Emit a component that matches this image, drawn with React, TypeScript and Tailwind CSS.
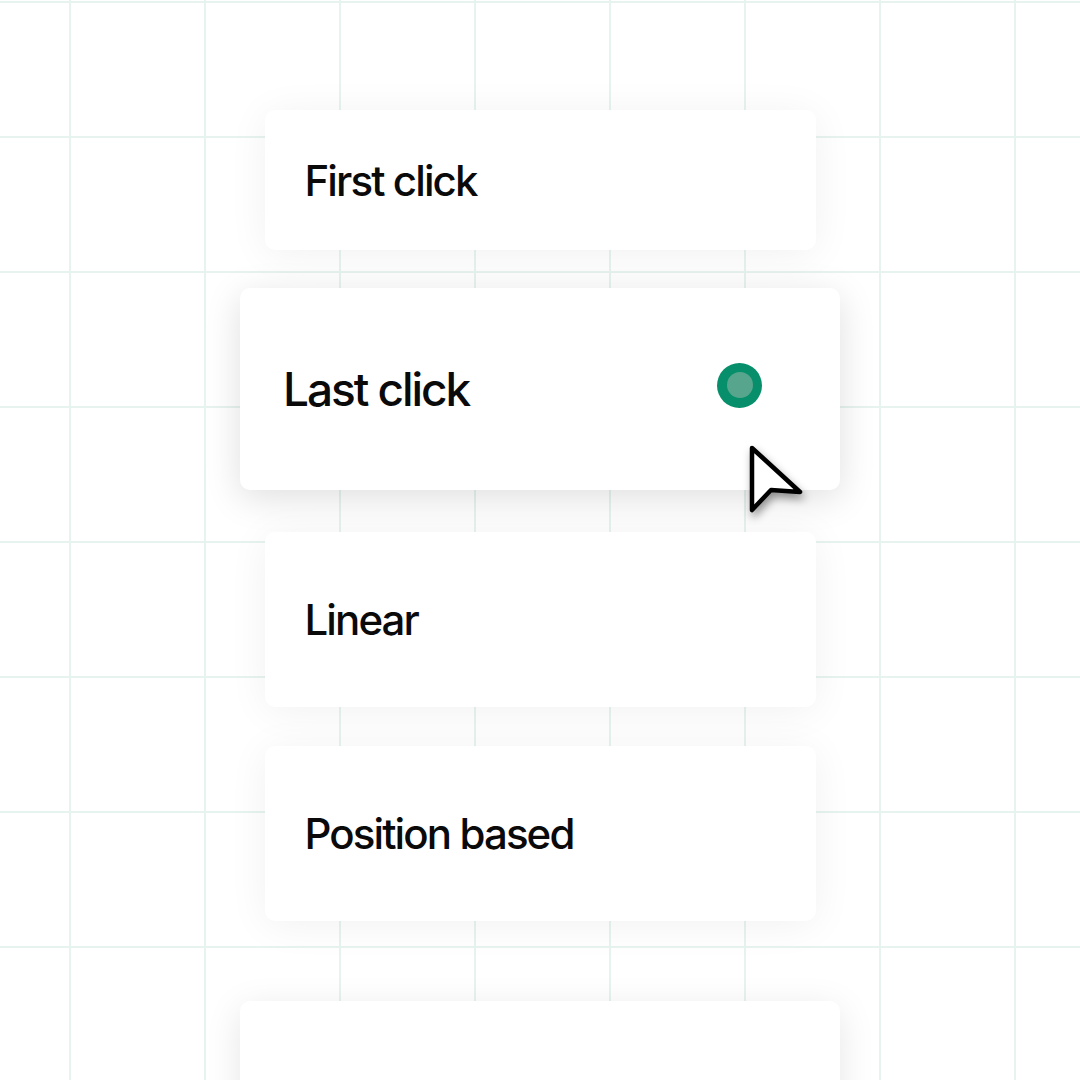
import React from "react";

const Cursor = () => (
  <svg
    width="60"
    height="72"
    viewBox="0 0 60 72"
    className="absolute left-[508px] top-[156px] drop-shadow-[2px_5px_4px_rgba(0,0,0,0.4)]"
  >
    <path
      d="M4 4 L52 48 L23 46 L4 66 Z"
      fill="#ffffff"
      stroke="#000000"
      strokeWidth="4.5"
      strokeLinejoin="round"
    />
  </svg>
);

const Option = ({ label, className }: { label: string; className: string }) => (
  <div
    className={`flex items-center rounded-[10px] bg-white pl-10 shadow-[0_4px_40px_rgba(0,0,0,0.06)] ${className}`}
  >
    <span className="text-[42px] font-medium tracking-[-0.045em] text-[#0a0a0a]">{label}</span>
  </div>
);

const App = () => {
  return (
    <div
      className="relative h-[1080px] w-[1080px] overflow-hidden bg-white bg-[linear-gradient(to_right,#e6f3ef_2px,transparent_2px),linear-gradient(to_bottom,#e6f3ef_2px,transparent_2px)] bg-size-[135px_135px] bg-position-[69px_1px]"
      style={{ fontFamily: "Inter, 'Noto Sans', sans-serif" }}
    >
      <div className="flex flex-col items-center pt-[110px]">
        <Option label="First click" className="h-[140px] w-[551px]" />

        {/* selected option */}
        <div className="relative mt-[38px] flex h-[202px] w-[600px] items-center justify-between rounded-[10px] bg-white pl-[43px] pr-[78px] shadow-[0_8px_36px_rgba(0,0,0,0.13)]">
          <span className="text-[46px] font-medium tracking-[-0.045em] text-[#0a0a0a]">Last click</span>
          <div className="mb-2 flex h-[45px] w-[45px] items-center justify-center rounded-full bg-[#078f6b]">
            <div className="h-[26px] w-[26px] rounded-full bg-[#58a58d]" />
          </div>
          <Cursor />
        </div>

        <Option label="Linear" className="mt-[42px] h-[175px] w-[551px]" />
        <Option label="Position based" className="mt-[39px] h-[175px] w-[551px]" />

        <div className="mt-[80px] flex h-[202px] w-[600px] items-center rounded-[10px] bg-white pl-[43px] shadow-[0_8px_36px_rgba(0,0,0,0.1)]">
          <span className="text-[46px] font-medium tracking-[-0.045em] text-[#0a0a0a]">Time decay</span>
        </div>
      </div>
    </div>
  );
};

export default App;
